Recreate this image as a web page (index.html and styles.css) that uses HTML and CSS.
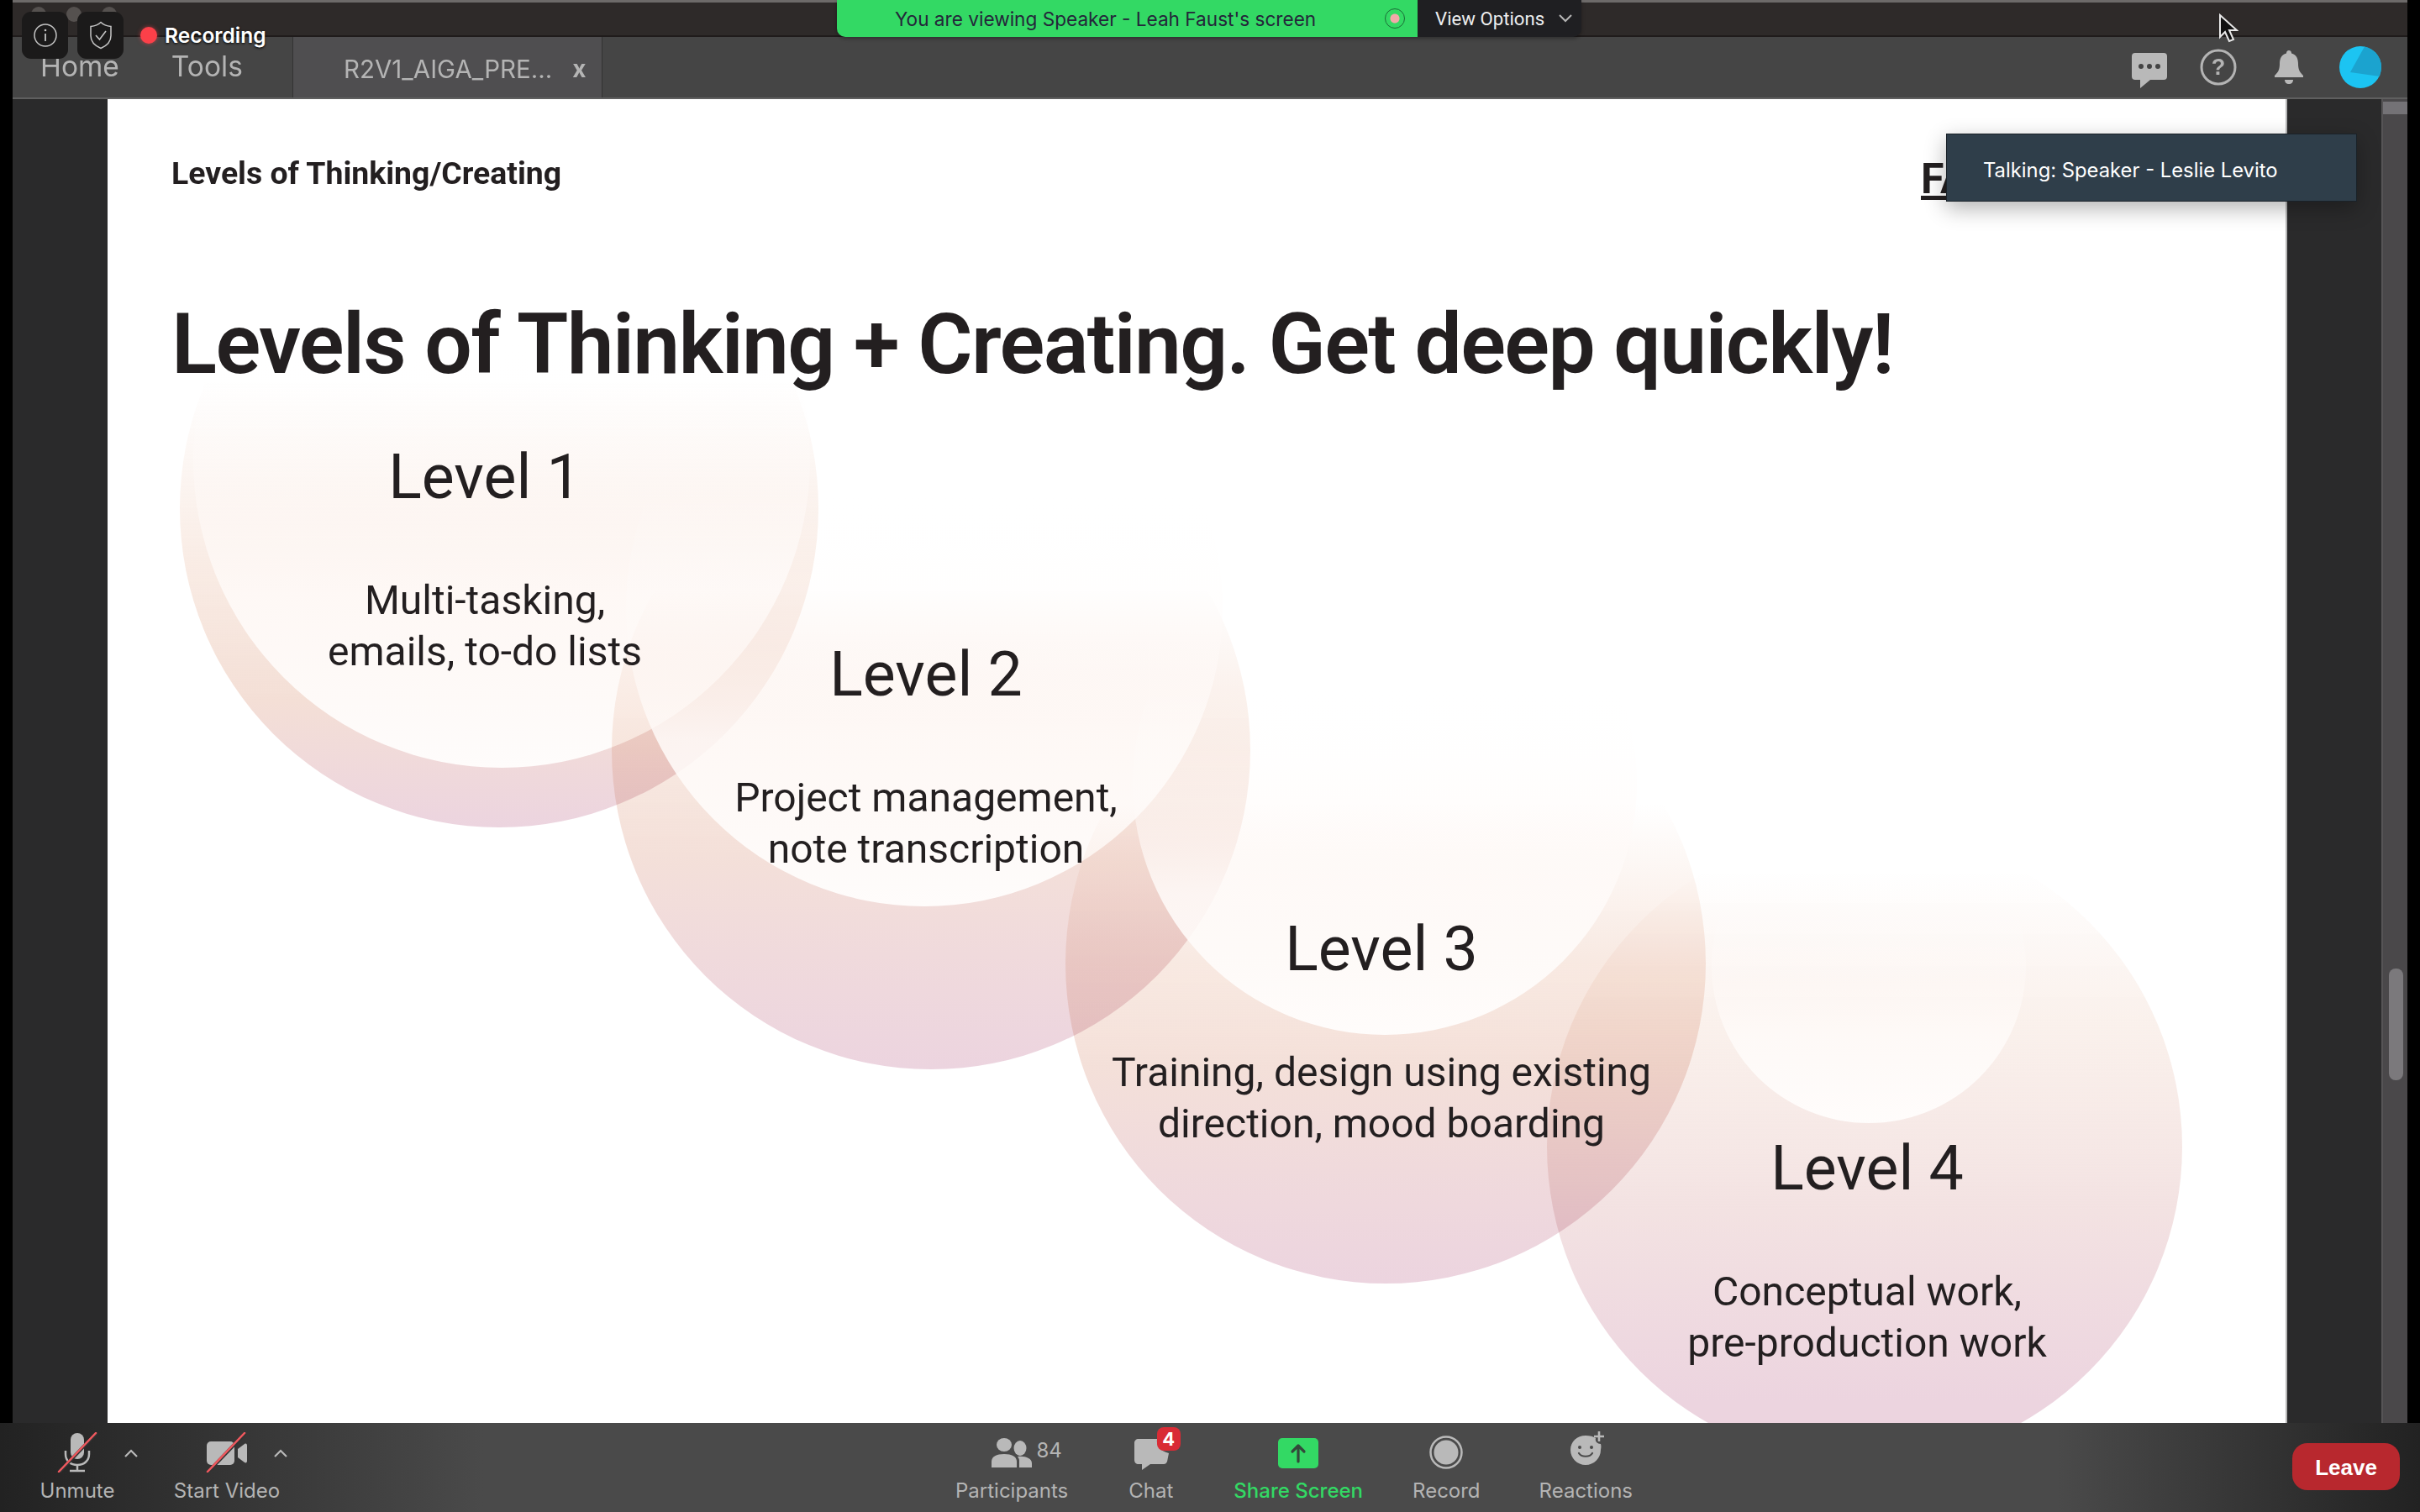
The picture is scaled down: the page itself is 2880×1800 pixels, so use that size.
FILE: index.html
```html
<!DOCTYPE html>
<html>
<head>
    <title>Zoom Meeting</title>
    <link rel="stylesheet" href="styles.css">
</head>
<body>
    <div class="window">
        <div class="titlebar">
            <span class="light"></span><span class="light"></span><span class="light"></span>
        </div>
        <div class="tabbar">
            <div class="tab-links">
                <span class="tab-link">Home</span>
                <span class="tab-link">Tools</span>
            </div>
            <div class="tab-doc">
                <span>R2V1_AIGA_PRE...</span>
                <span class="tab-close">x</span>
            </div>
            <div class="tab-icons">
                <svg class="ic-msg" viewBox="0 0 42 42"><path fill="#b9b9b9" d="M4 0h34a4 4 0 0 1 4 4v24a4 4 0 0 1-4 4H22L10 42v-10H4a4 4 0 0 1-4-4V4a4 4 0 0 1 4-4z"/><circle cx="11" cy="16" r="3" fill="#444"/><circle cx="21" cy="16" r="3" fill="#444"/><circle cx="31" cy="16" r="3" fill="#444"/></svg>
                <svg class="ic-help" viewBox="0 0 44 44"><circle cx="22" cy="22" r="20" fill="none" stroke="#b4b4b4" stroke-width="3"/><text x="22" y="31" text-anchor="middle" class="help-mark">?</text></svg>
                <svg class="ic-bell" viewBox="0 0 36 40"><path fill="#b9b9b9" d="M18 0c2 0 3 1.500 3 3.500C27 5 29 10 29 16c0 7 2 10 6 14v2H1v-2c4-4 6-7 6-14 0-6 2-11 8-12.500C15 1.500 16 0 18 0z"/><path fill="#b9b9b9" d="M13 35h10c0 3-2 5-5 5s-5-2-5-5z"/></svg>
                <svg class="ic-avatar" viewBox="0 0 50 50"><circle cx="25" cy="25" r="25" fill="#1cc4f2"/><path fill="#1ba3cf" d="M30 0.500 A25 25 0 0 1 50 24 L48 36 L13 31z"/></svg>
            </div>
        </div>
        <div class="viewer">
            <div class="side-panel"></div>
            <div class="slide">
                <svg class="diagram" viewBox="128 118 2594 1576">
                    <defs>
                        <linearGradient id="outerTop" x1="0" y1="0" x2="0" y2="1">
                            <stop offset="0.3" stop-color="#f6e2d7" stop-opacity="0"/>
                            <stop offset="0.58" stop-color="#f6e2d7" stop-opacity="0.65"/>
                            <stop offset="0.8" stop-color="#f4dfd6"/>
                            <stop offset="1" stop-color="#ecd4df"/>
                        </linearGradient>
                        <linearGradient id="outerA" x1="0" y1="0" x2="0" y2="1">
                            <stop offset="0.25" stop-color="#f6e2d7" stop-opacity="0"/>
                            <stop offset="0.5" stop-color="#f6e2d8" stop-opacity="0.75"/>
                            <stop offset="0.66" stop-color="#f4e0d9"/>
                            <stop offset="0.82" stop-color="#f0dadc"/>
                            <stop offset="1" stop-color="#ecd4df"/>
                        </linearGradient>
                        <linearGradient id="outerB" x1="0" y1="0" x2="0" y2="1">
                            <stop offset="0.07" stop-color="#f8e8e0" stop-opacity="0"/>
                            <stop offset="0.3" stop-color="#f8ebe4" stop-opacity="0.7"/>
                            <stop offset="0.6" stop-color="#f3e2e2"/>
                            <stop offset="0.9" stop-color="#ecd4df"/>
                        </linearGradient>
                        <linearGradient id="innerA" x1="0" y1="0" x2="0" y2="1">
                            <stop offset="0.3" stop-color="#fff" stop-opacity="0"/>
                            <stop offset="0.55" stop-color="#fffaf8" stop-opacity="0.45"/>
                            <stop offset="0.72" stop-color="#fffbf9" stop-opacity="0.85"/>
                            <stop offset="1" stop-color="#fffdfc" stop-opacity="0.97"/>
                        </linearGradient>
                    </defs>
                    <circle class="disc" cx="594" cy="605" r="380" fill="url(#outerTop)"/>
                    <circle cx="597" cy="547" r="367" fill="url(#innerA)"/>
                    <circle class="disc" cx="1108" cy="893" r="380" fill="url(#outerA)"/>
                    <circle cx="1100" cy="724" r="355" fill="url(#innerA)"/>
                    <circle class="disc" cx="1649" cy="1147" r="381" fill="url(#outerA)"/>
                    <circle cx="1648" cy="932" r="300" fill="url(#innerA)"/>
                    <circle class="disc" cx="2219" cy="1365" r="378" fill="url(#outerB)"/>
                    <circle cx="2224" cy="1150" r="187" fill="url(#innerA)"/>
                </svg>
                <div class="slide-head">
                    <span class="slide-crumb">Levels of Thinking/Creating</span>
                    <span class="slide-mark">FA</span>
                </div>
                <h1 class="slide-title">Levels of Thinking + Creating. Get deep quickly!</h1>
                <div class="level level-1">
                    <h2>Level 1</h2>
                    <p>Multi-tasking,<br>emails, to-do lists</p>
                </div>
                <div class="level level-2">
                    <h2>Level 2</h2>
                    <p>Project management,<br>note transcription</p>
                </div>
                <div class="level level-3">
                    <h2>Level 3</h2>
                    <p>Training, design using existing<br>direction, mood boarding</p>
                </div>
                <div class="level level-4">
                    <h2>Level 4</h2>
                    <p>Conceptual work,<br>pre-production work</p>
                </div>
            </div>
            <div class="side-panel side-right"></div>
            <div class="scrollbar">
                <div class="scroll-top"></div>
                <div class="scroll-thumb"></div>
            </div>
        </div>
    </div>

    <div class="toolbar">
        <div class="tool-left">
            <div class="tool tool-mic">
                <svg class="ic-mic" viewBox="0 0 48 48">
                    <rect x="16" y="1" width="16" height="31" rx="8" fill="#b9b9b9"/>
                    <path d="M10 22v4c0 8 6 13 14 13s14-5 14-13v-4" fill="none" stroke="#b9b9b9" stroke-width="2.500"/>
                    <path d="M24 39v6M15 46h18" fill="none" stroke="#b9b9b9" stroke-width="2.500"/>
                    <path d="M3 47 47 1" stroke="#333" stroke-width="4"/>
                    <path d="M2 47 46 1" stroke="#f0585e" stroke-width="2.500" stroke-linecap="round"/>
                </svg>
                <span>Unmute</span>
            </div>
            <svg class="caret" viewBox="0 0 16 10"><path d="M1 9l7-7 7 7" fill="none" stroke="#b9b9b9" stroke-width="2.200"/></svg>
            <div class="tool tool-video">
                <svg class="ic-video" viewBox="0 0 50 48">
                    <rect x="1" y="11" width="33" height="28" rx="5" fill="#b9b9b9"/>
                    <path d="M38 20l8-6c2-1 3 0 3 2v18c0 2-1 3-3 2l-8-6z" fill="#b9b9b9"/>
                    <path d="M3 47 47 1" stroke="#333" stroke-width="4"/>
                    <path d="M2 47 46 1" stroke="#f0585e" stroke-width="2.500" stroke-linecap="round"/>
                </svg>
                <span>Start Video</span>
            </div>
            <svg class="caret" viewBox="0 0 16 10"><path d="M1 9l7-7 7 7" fill="none" stroke="#b9b9b9" stroke-width="2.200"/></svg>
        </div>
        <div class="tool-center">
            <div class="tool tool-people">
                <div class="people-row">
                    <svg class="ic-people" viewBox="0 0 48 35">
                        <ellipse cx="15" cy="8" rx="9" ry="8" fill="#b9b9b9"/>
                        <ellipse cx="34" cy="12" rx="7.500" ry="9" fill="#b9b9b9"/>
                        <path d="M0 35v-7c0-6 6-9 15-9s15 3 15 9v7z" fill="#b9b9b9"/>
                        <path d="M33 35v-8c0-2-1-4-2-5 9-1 17 2 17 8v5z" fill="#b9b9b9"/>
                    </svg>
                    <span class="count">84</span>
                </div>
                <span>Participants</span>
            </div>
            <div class="tool tool-chat">
                <div class="icon-wrap">
                    <svg class="ic-chat" viewBox="0 0 42 38"><path fill="#b9b9b9" d="M6 1h22c-1 8 3 14 14 17l-2 10c-1 2-2 3-4 3H20L10 38v-7H6c-3 0-5-2-5-5V6c0-3 2-5 5-5z"/></svg>
                    <b class="badge">4</b>
                </div>
                <span>Chat</span>
            </div>
            <div class="tool tool-share">
                <svg class="ic-share" viewBox="0 0 48 36">
                    <rect width="48" height="36" rx="5" fill="#33d964"/>
                    <path d="M24 28V9M17 16l7-7 7 7" fill="none" stroke="#33483a" stroke-width="3.200" stroke-linecap="round" stroke-linejoin="round"/>
                </svg>
                <span>Share Screen</span>
            </div>
            <div class="tool tool-record">
                <svg class="ic-record" viewBox="0 0 40 40"><circle cx="20" cy="20" r="18.500" fill="none" stroke="#b9b9b9" stroke-width="2.500"/><circle cx="20" cy="20" r="14.500" fill="#b9b9b9"/></svg>
                <span>Record</span>
            </div>
            <div class="tool tool-react">
                <svg class="ic-react" viewBox="0 0 42 41">
                    <path fill="#b9b9b9" d="M18 6c5 0 9 1 12 3-1 4 2 7 6 7 1 3 0 6 0 7 0 10-8 18-18 18S0 33 0 23 8 6 18 6z"/>
                    <circle cx="11" cy="20" r="2" fill="#4a4a4a"/><circle cx="25" cy="20" r="2" fill="#4a4a4a"/>
                    <path d="M10 27c3 5 13 5 16 0" fill="none" stroke="#4a4a4a" stroke-width="2.200" stroke-linecap="round"/>
                    <path d="M34 1v12M28 7h12" stroke="#b9b9b9" stroke-width="2.600" fill="none"/>
                </svg>
                <span>Reactions</span>
            </div>
        </div>
        <div class="tool-right">
            <button class="leave">Leave</button>
        </div>
    </div>

    <!-- floating stuff on top of the meeting window -->
    <div class="meeting-badges">
        <span class="badge-btn">
            <svg viewBox="0 0 28 28"><circle cx="14" cy="14" r="13" fill="none" stroke="#c4c4c4" stroke-width="1.500"/><path d="M14 12v9" stroke="#c4c4c4" stroke-width="1.800"/><circle cx="14" cy="8" r="1.300" fill="#c4c4c4"/></svg>
        </span>
        <span class="badge-btn">
            <svg viewBox="0 0 28 34"><path d="M14 1.500c3 3 7 4.500 12 5v11c0 7-5 12-12 15-7-3-12-8-12-15v-11c5-.5 9-2 12-5z" fill="none" stroke="#c4c4c4" stroke-width="1.500"/><path d="M8 17l4.500 5L20 12" fill="none" stroke="#c4c4c4" stroke-width="1.600"/></svg>
        </span>
        <span class="rec-dot"></span>
        <span class="rec-label">Recording</span>
    </div>

    <div class="share-banner">
        <div class="share-green">
            <span class="share-text">You are viewing Speaker - Leah Faust's screen</span>
            <span class="share-dot"></span>
        </div>
        <div class="share-options">
            <span>View Options</span>
            <svg class="opt-caret" viewBox="0 0 16 10"><path d="M1 1l7 7 7-7" fill="none" stroke="#b5b5b5" stroke-width="2"/></svg>
        </div>
    </div>

    <div class="talking">Talking: Speaker - Leslie Levito</div>

    <svg class="cursor" viewBox="0 0 24 36"><path d="M2 2v26l6-6 5 11 5-2-5-11h9z" fill="#111" stroke="#e8e8e8" stroke-width="2"/></svg>
</body>
</html>
```

FILE: styles.css
```css
* { box-sizing: border-box; }
html, body { margin: 0; padding: 0; }
body { width: 2880px; height: 1800px; background: #000; overflow: hidden; position: relative; font-family: Inter, "Liberation Sans", sans-serif; display: flex; flex-direction: column; }

/* meeting window */
.window { flex: 1; margin: 0 15px; display: flex; flex-direction: column; min-height: 0; }
.titlebar { height: 44px; background: #2e2a29; border-top: 3px solid #6d6a69; border-bottom: 2px solid #1f1b1b; display: flex; gap: 24px; padding: 5px 0 0 22px; }
.light { width: 18px; height: 18px; border-radius: 50%; background: #55514f; }

.tabbar { height: 74px; background: #454545; border-bottom: 2px solid #5f5f5f; display: flex; align-items: stretch; color: #b4b4b4; filter: blur(0.5px); }
.tab-links { width: 334px; padding-left: 33px; display: flex; gap: 62px; align-items: center; padding-bottom: 2px; border-right: 1px solid #333; }
.tab-link { font-size: 33.5px; }
.tab-doc { width: 368px; background: #4f4e50; border-right: 1px solid #333; display: flex; align-items: center; gap: 24px; padding: 3px 0 0 60px; font-size: 29.5px; }
.tab-close { font-size: 28px; font-weight: 700; }
.tab-icons { flex: 1; display: flex; align-items: center; justify-content: flex-end; padding-right: 31px; }
.ic-msg { width: 42px; height: 42px; margin-right: 39px; margin-top: 8px; }
.ic-help { width: 44px; height: 44px; margin-right: 44px; }
.help-mark { font: 700 27px "Liberation Sans", sans-serif; fill: #b4b4b4; }
.ic-bell { width: 36px; height: 40px; margin-right: 42px; }
.ic-avatar { width: 50px; height: 50px; }

.viewer { flex: 1; display: flex; min-height: 0; }
.side-panel { width: 113px; background: #2a2a2b; }
.side-right { width: 112px; }
.slide { width: 2594px; background: #fff; position: relative; overflow: hidden; color: #231f20; border-right: 2px solid #b5b5b5; font-family: Roboto, "Liberation Sans", sans-serif; filter: blur(0.5px); }
.scrollbar { width: 31px; background: #4a484a; border-left: 2px solid #565456; position: relative; }
.scroll-top { height: 15px; margin-top: 3px; background: #747276; }
.scroll-thumb { position: absolute; top: 1035px; left: 7px; width: 17px; height: 133px; border-radius: 8px; background: #7b797c; }

/* the slide */
.diagram { position: absolute; left: 0; top: 0; width: 2594px; height: 1576px; }
.disc { mix-blend-mode: multiply; }
.slide-head { position: relative; display: flex; justify-content: space-between; padding: 66px 0 0 76px; height: 120px; }
.slide-crumb { font-size: 37.4px; font-weight: 700; }
.slide-mark { width: 434px; font-size: 50px; font-weight: 700; text-decoration: underline; }
.slide-title { position: relative; margin: 0 0 0 76px; font-size: 100px; font-weight: 600; letter-spacing: -1.63px; line-height: 130px; padding-top: 107px; white-space: nowrap; }
.level { position: absolute; width: 900px; text-align: center; }
.level h2 { margin: 0; font-size: 73.5px; font-weight: 400; line-height: 90px; }
.level p { margin: 71px 0 0; font-size: 48px; line-height: 61px; }
.level-1 { left: -1px; top: 405px; }
.level-2 { left: 524px; top: 640px; }
.level-3 { left: 1066px; top: 967px; }
.level-4 { left: 1644px; top: 1228px; }

/* bottom toolbar */
.toolbar { height: 106px; flex: none; display: grid; grid-template-columns: 1137px auto 1fr; background: linear-gradient(90deg, #222 0, #4a4a4a 20%, #4a4a4a 85%, #222 100%); color: #b4b4b4; font-size: 24px; }
.tool { display: flex; flex-direction: column; align-items: center; justify-content: flex-end; height: 100%; padding-bottom: 11px; position: relative; white-space: nowrap; }
.tool-left { display: flex; padding-left: 48px; }
.tool-mic { width: 88px; }
.tool-video { width: 88px; margin-left: 62px; }
.tool-mic svg, .tool-video svg { position: absolute; top: 11px; }
.ic-mic { width: 48px; height: 48px; }
.ic-video { width: 50px; height: 48px; }
.caret { width: 16px; height: 10px; margin: 31px 0 0 12px; flex: none; }
.tool-center { display: flex; gap: 72px; }
.tool-center .tool { padding-top: 18px; justify-content: space-between; }
.people-row { display: flex; align-items: flex-start; gap: 5px; margin-left: 36px; }
.ic-people { width: 48px; height: 35px; }
.count { line-height: 30px; }
.icon-wrap { position: relative; }
.ic-chat { width: 42px; height: 38px; display: block; }
.badge { position: absolute; left: 28px; top: -13px; width: 28px; height: 28px; border-radius: 8px; background: #d92b35; color: #fff; font-size: 22px; line-height: 28px; text-align: center; }
.ic-share { width: 48px; height: 36px; }
.tool-share { color: #33d964; font-weight: 500; }
.tool-record { margin-left: -13px; }
.ic-record { width: 40px; height: 40px; margin-top: -3px; }
.tool-react { margin-left: -2px; }
.ic-react { width: 42px; height: 41px; margin-top: -9px; margin-left: 6px; }
.tool-right { display: flex; justify-content: flex-end; align-items: flex-start; padding: 24px 24px 0 0; }
.leave { width: 128px; height: 56px; border: none; border-radius: 18px; background: #b8282e; color: #fff; font: 700 26px "Liberation Sans", sans-serif; padding-top: 3px; }

/* overlays */
.meeting-badges { position: absolute; left: 26px; top: 14px; display: flex; align-items: center; }
.badge-btn { width: 55px; height: 56px; margin-right: 11px; border-radius: 11px; background: #1b1a1a; display: flex; align-items: center; justify-content: center; }
.badge-btn svg { width: 28px; height: 34px; }
.rec-dot { width: 20px; height: 20px; border-radius: 50%; background: #fb4049; margin: 0 9px 0 9px; box-shadow: 0 0 5px rgba(251, 64, 73, .6); }
.rec-label { color: #fff; font-size: 24.5px; font-weight: 600; text-shadow: 0 1px 3px #000; }

.share-banner { position: absolute; left: 996px; top: 0; display: flex; height: 44px; font-size: 22.6px; box-shadow: 0 2px 4px rgba(0, 0, 0, .3); border-radius: 0 0 10px 10px; }
.share-green { width: 691px; background: #33d964; color: #24263a; border-radius: 0 0 0 10px; display: flex; align-items: center; padding-left: 69px; position: relative; }
.share-dot { position: absolute; right: 15px; top: 10px; width: 24px; height: 24px; border: 1.500px solid #1b6b36; border-radius: 50%; background: radial-gradient(circle, #f3a9a9 0 5px, #33d964 6px); }
.share-options { width: 195px; background: #1f1f22; color: #eee; border-radius: 0 0 10px 0; display: flex; align-items: center; padding-left: 21px; gap: 17px; font-family: Roboto, sans-serif; font-size: 22.2px; }
.opt-caret { width: 16px; height: 10px; }

.talking { position: absolute; left: 2316px; top: 159px; width: 489px; height: 81px; background: #2f3e4a; color: #fff; border: 1px solid #1a2229; font-size: 23.8px; display: flex; align-items: center; padding: 6px 0 0 43px; box-shadow: 0 8px 24px rgba(0, 0, 0, .3); }
.cursor { position: absolute; left: 2640px; top: 16px; width: 24px; height: 36px; }
```
